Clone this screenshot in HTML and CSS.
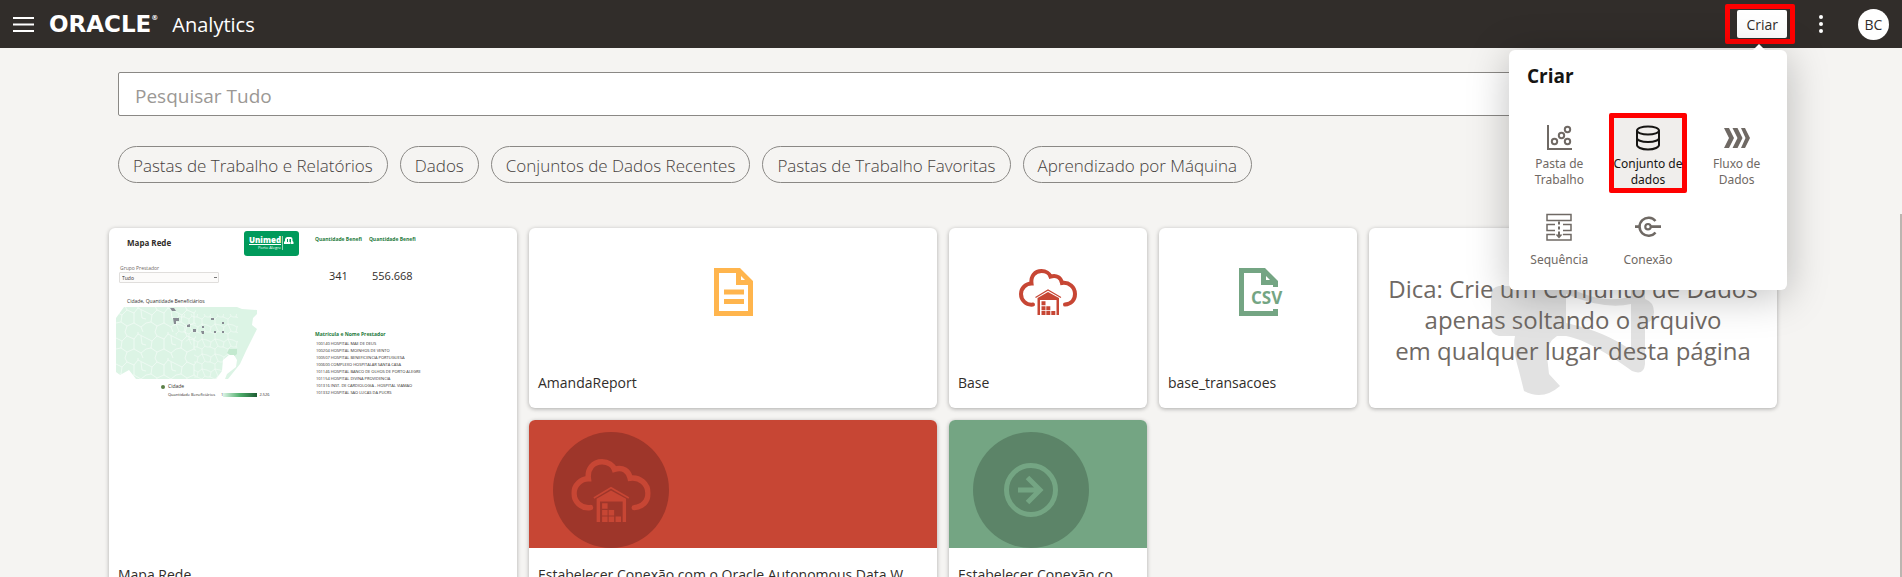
FILE: index.html
```html
<!DOCTYPE html>
<html lang="pt-BR">
<head>
<meta charset="utf-8">
<title>Oracle Analytics</title>
<link rel="stylesheet" href="styles.css">
</head>
<body>
<svg class="defs" aria-hidden="true">
  <symbol id="cloud-house" viewBox="0 0 58 46">
    <path d="M14 35.500C7 36.500 2 31 2 25C2 19 7 14.500 12.500 14.500C11.500 7 16 2 22.500 2C27 2 30.500 4.500 31.500 7.500C38 5.500 42 9 43 14C50 13 56 18 56 25C56 31 52 35 46 35.500" fill="none" stroke="currentColor" stroke-width="4" stroke-linecap="round"/>
    <path d="M16.500 28.500L29 21L42 28.500" fill="none" stroke="currentColor" stroke-width="1.200"/>
    <path fill="currentColor" d="M18.500 46V29L29 23L40 29V46H37.500V31H21V46Z"/>
    <path fill="currentColor" d="M22.500 32.300h4v4h-4zM22.500 37.200h4v4h-4zM22.500 42h4v4h-4zM27.300 37.200h4v4h-4zM27.300 42h4v4h-4zM32.300 42h4v4h-4z"/>
  </symbol>
</svg>
<header class="topbar">
  <button class="icon-button menu-button" aria-label="Menu">
    <svg width="22" height="16" viewBox="0 0 22 16"><path d="M0 2h21M0 8.500h21M0 15h21" stroke="#fff" stroke-width="2"/></svg>
  </button>
  <span class="brand">ORACLE<sup class="brand-mark">®</sup></span>
  <span class="product">Analytics</span>
  <div class="actions">
    <div class="create">
      <div class="create-frame"><button class="create-button" aria-expanded="true">Criar</button></div>
      <section class="popup" aria-label="Criar">
        <h2 class="popup-title">Criar</h2>
        <div class="popup-grid">
          <button class="tile">
            <svg width="26" height="26" viewBox="0 0 26 26" fill="none" stroke="currentColor" stroke-width="2"><path d="M2 0v24H26"/><circle cx="8.500" cy="16.500" r="2.700"/><circle cx="15.500" cy="10.500" r="2.700"/><circle cx="21.500" cy="4.500" r="2.700"/><circle cx="21.500" cy="16.500" r="2.700"/></svg>
            <span class="tile-label">Pasta de<br>Trabalho</span>
          </button>
          <button class="tile tile-selected">
            <svg width="26" height="26" viewBox="0 0 26 26" fill="none" stroke="currentColor" stroke-width="2"><ellipse cx="13" cy="5.500" rx="11" ry="4"/><path d="M2 5.500V20C2 22 6 24.500 13 24.500S24 22 24 20V5.500M2 13C2 15 6 17 13 17S24 15 24 13"/></svg>
            <span class="tile-label">Conjunto de<br>dados</span>
          </button>
          <button class="tile">
            <svg width="26" height="26" viewBox="0 0 26 26" fill="currentColor"><path d="M0 3H5L10 13L5 23H0L5 13ZM8.500 3H13.500L18.500 13L13.500 23H8.500L13.500 13ZM17 3H21L26 13L21 23H17L21.500 13Z"/></svg>
            <span class="tile-label">Fluxo de<br>Dados</span>
          </button>
          <button class="tile">
            <svg width="26" height="28" viewBox="0 0 26 28" fill="none" stroke="currentColor" stroke-width="1.500"><path d="M1 1.500H25V7.500H1ZM9 11.500H1V17.500H9M17 11.500H25V17.500H17M9 21.500H1V27H25V21.500H17"/><path d="M13 8.500v3M13 13.500v3M13 18.500v5" stroke-width="2"/><path d="M9.500 21.500h7L13 25.500Z" fill="currentColor" stroke="none"/></svg>
            <span class="tile-label">Sequência</span>
          </button>
          <button class="tile">
            <svg width="26" height="28" viewBox="0 0 26 28" fill="none" stroke="currentColor"><path d="M20.500 8A9 9 0 1 0 20.500 19.500" stroke-width="2.500"/><circle cx="13" cy="13.700" r="2.700" stroke-width="2.200"/><path d="M0 13.700h5M16 13.700h10" stroke-width="2.800"/></svg>
            <span class="tile-label">Conexão</span>
          </button>
        </div>
      </section>
    </div>
    <button class="icon-button more-button" aria-label="Mais opções">
      <svg width="6" height="18" viewBox="0 0 6 18" fill="#fff"><circle cx="3" cy="2" r="2"/><circle cx="3" cy="9" r="2"/><circle cx="3" cy="16" r="2"/></svg>
    </button>
    <button class="avatar">BC</button>
  </div>
</header>
<main class="home">
  <div class="search-area">
    <input class="search" type="search" placeholder="Pesquisar Tudo" aria-label="Pesquisar Tudo">
    <nav class="chips">
      <button class="chip">Pastas de Trabalho e Relatórios</button>
      <button class="chip">Dados</button>
      <button class="chip">Conjuntos de Dados Recentes</button>
      <button class="chip">Pastas de Trabalho Favoritas</button>
      <button class="chip">Aprendizado por Máquina</button>
    </nav>
  </div>
  <div class="cards">
    <article class="card card-large">
      <div class="preview">
        <div class="preview-left">
          <div class="preview-head">
            <h4 class="preview-title">Mapa Rede</h4>
            <div class="unimed">
              <div class="unimed-text"><b>Unimed</b><span>Porto Alegre</span></div>
              <svg width="12" height="14" viewBox="0 0 12 14"><path d="M.5 0V14" stroke="#fff" stroke-width=".6"/><path d="M2 8V6L3 5V3Q3.500 1 5.500 1H8.500Q10.500 1 10.500 3V5L11.500 6V8H9V3H7.500V6H8.500V8H5V6H6V3H5V8Z" fill="#fff"/></svg>
            </div>
          </div>
          <label class="preview-label" for="grupo">Grupo Prestador</label>
          <select class="preview-select" id="grupo"><option>Tudo</option></select>
          <h5 class="preview-caption">Cidade, Quantidade Beneficiários</h5>
          <svg class="map" width="142" height="74" viewBox="0 0 142 74" aria-hidden="true">
            <defs>
              <clipPath id="land"><path d="M0 12L8 1H121L126 3L141 4V8L137 12L136 19L141 23L130 45L124 58L112 73H109L111 68L120 61L121 54L118 49H113L107 54L106 65L100 73H20L13 64L4 69L0 66Z"/></clipPath>
              <pattern id="cells" width="30" height="26" patternUnits="userSpaceOnUse"><path d="M0 6L6 9L11 4L18 7L22 2L30 6M6 9L5 16L11 20L18 17L18 7M18 17L25 21L30 17M11 20L9 26M25 21L27 26M22 2V0M11 4L9 0M5 16L0 17M25 4L26 12L30 13" fill="none" stroke="#fff" stroke-width=".5"/></pattern>
              <pattern id="cells-small" width="13" height="15" patternUnits="userSpaceOnUse"><path d="M0 4L4 6L8 3L13 4M4 6L3 11L8 13L11 10L8 3M11 10L13 11M0 11H3M8 13V15M8 3V0" fill="none" stroke="#fff" stroke-width=".4"/></pattern>
            </defs>
            <g clip-path="url(#land)">
              <rect width="142" height="74" fill="#dcf4e5"/>
              <rect width="80" height="74" fill="url(#cells)"/>
              <path d="M55 8H122V40L105 74H78V40L60 30Z" fill="url(#cells-small)"/>
              <path d="M113 43H121V48L117 51L111 47Z" fill="#c3e9cf"/>
            </g>
            <path fill="#888b93" d="M54 2h4l2 3h-4zM57 12h6v3h-3v3h-2zM71 19l3-1v3h-3zM77 23h3v3h-3zM86 20h2v2h-2zM85 25h3v3h-2zM95 12h3v2h-3zM106 16h2v2h-2zM98 25h2v2h-2zM106 25h2v2h-2z"/>
          </svg>
          <div class="legend"><i class="dot"></i>Cidade</div>
          <div class="legend legend-scale">Quantidade Beneficiários<span class="scale-from">1</span><i class="scale"></i>2.526</div>
        </div>
        <div class="preview-right">
          <div class="kpis">
            <div class="kpi"><h5>Quantidade Benefi</h5><b>341</b></div>
            <div class="kpi"><h5>Quantidade Benefi</h5><b>556.668</b></div>
          </div>
          <h5 class="list-title">Matrícula e Nome Prestador</h5>
          <ul class="list">
            <li>100140 HOSPITAL MAE DE DEUS</li>
            <li>100204 HOSPITAL MOINHOS DE VENTO</li>
            <li>100507 HOSPITAL BENEFICENCIA PORTUGUESA</li>
            <li>100600 COMPLEXO HOSPITALAR SANTA CASA</li>
            <li>101146 HOSPITAL BANCO DE OLHOS DE PORTO ALEGRE</li>
            <li>101154 HOSPITAL DIVINA PROVIDENCIA</li>
            <li>101316 INST. DE CARDIOLOGIA - HOSPITAL VIAMAO</li>
            <li>101332 HOSPITAL SAO LUCAS DA PUCRS</li>
          </ul>
        </div>
      </div>
      <h3 class="card-title">Mapa Rede</h3>
    </article>
    <article class="card card-wide">
      <div class="card-art">
        <svg width="39" height="48" viewBox="0 0 39 48" fill="#ffb54d"><path fill-rule="evenodd" d="M0 0H26L39 13V48H0ZM5 5V43H34V17H22V5ZM27 8V12H31Z"/><path d="M10 21.500H30V26.500H10ZM10 31H30V36H10Z"/></svg>
      </div>
      <h3 class="card-title">AmandaReport</h3>
    </article>
    <article class="card">
      <div class="card-art red"><svg width="58" height="46"><use href="#cloud-house"/></svg></div>
      <h3 class="card-title">Base</h3>
    </article>
    <article class="card">
      <div class="card-art">
        <svg class="csv" width="39" height="48" viewBox="0 0 39 48" fill="#74a583"><path fill-rule="evenodd" d="M0 0H26L39 13V19H34V17H22V5H5V43H34V41H39V48H0ZM27 8V12H31Z"/><text class="csv-text" x="12" y="36">CSV</text></svg>
      </div>
      <h3 class="card-title">base_transacoes</h3>
    </article>
    <article class="card card-wide tip">
      <svg class="tip-art" width="164" height="112" viewBox="122 57 164 112" aria-hidden="true"><path fill="#e2e2e2" d="M130 58H197Q235 78 262 68V60H276V71Q285 74 285 84Q285 93 276 96V136Q275 148 263 143C240 126 215 111 197 108H188Q178 114 178 128L180 146L191 158Q174 173 155 163L150 143Q143 120 146 108H130Q122 106 122 100V66Q123 59 130 58ZM197 66V95Q235 103 262 122V76Q235 82 197 66Z" fill-rule="evenodd"/></svg>
      <p class="tip-text">Dica: Crie um Conjunto de Dados<br>apenas soltando o arquivo<br>em qualquer lugar desta página</p>
    </article>
    <article class="card card-wide">
      <div class="banner banner-red"><div class="disc"><svg width="80" height="63" viewBox="0 0 58 46"><use href="#cloud-house"/></svg></div></div>
      <h3 class="card-title">Estabelecer Conexão com o Oracle Autonomous Data W</h3>
    </article>
    <article class="card">
      <div class="banner banner-green"><div class="disc"><svg width="54" height="54" viewBox="0 0 54 54" fill="none" stroke="currentColor" stroke-width="5"><circle cx="27" cy="27" r="24.500"/><path d="M14 27H37M23.500 14.500L36 27L23.500 39.500"/></svg></div></div>
      <h3 class="card-title">Estabelecer Conexão co</h3>
    </article>
  </div>
  <div class="scroll-thumb"></div>
</main>
</body>
</html>
```

FILE: styles.css
```css
* { box-sizing: border-box; }

body {
  margin: 0;
  height: 100vh;
  display: flex;
  flex-direction: column;
  overflow: hidden;
  background: #f5f4f2;
  color: #312d2a;
  font-family: "Open Sans", "Noto Sans", sans-serif;
}

h2, h3, h4, h5, p, ul { margin: 0; padding: 0; }
button { margin: 0; font-family: inherit; cursor: pointer; }
svg { display: block; flex: none; }
.defs { position: absolute; width: 0; height: 0; }

/* Top bar */
.topbar {
  flex: none;
  display: flex;
  align-items: center;
  height: 48px;
  padding: 0 13px;
  background: #312d2a;
  color: #fff;
}
.icon-button { border: 0; padding: 0; background: none; }
.brand {
  display: flex;
  align-items: flex-start;
  margin-left: 14px;
  font: bold 23px/28px "DejaVu Sans", sans-serif;
}
.brand-mark { font-size: 7px; line-height: 16px; }
.product { margin-left: 14px; padding-top: 1px; font-size: 20px; line-height: 28px; }
.actions { margin-left: auto; display: flex; align-items: center; }
.create { position: relative; }
.create-frame {
  display: flex;
  padding: 1px 3px 1px 7px;
  border: 5px solid #f00;
  border-radius: 2px;
}
.create-button {
  height: 28px;
  padding: 0 9px;
  border: 0;
  border-radius: 2px;
  background: #fff;
  color: #312d2a;
  font-size: 14px;
}
.more-button { margin-left: 23px; }
.avatar {
  width: 31px;
  height: 31px;
  margin-left: 34px;
  padding: 0;
  border: 0;
  border-radius: 50%;
  background: #fff;
  color: #312d2a;
  font-size: 14px;
}

/* Create popup */
.popup {
  position: absolute;
  z-index: 5;
  top: 46px;
  right: 8px;
  width: 278px;
  padding: 14px 6px 9px;
  border-radius: 6px;
  background: #fff;
  box-shadow: 0 6px 40px rgba(0, 0, 0, .25);
  color: #161513;
}
.popup::before {
  content: "";
  position: absolute;
  top: -6px;
  right: 21px;
  border: 7px solid transparent;
  border-top: 0;
  border-bottom-color: #fff;
}
.popup-title { padding-left: 12px; font-size: 19px; line-height: 24px; }
.popup-grid {
  display: grid;
  grid-template-columns: repeat(3, 1fr);
  justify-items: center;
  gap: 8px 0;
  padding-top: 25px;
}
.tile {
  display: flex;
  flex-direction: column;
  align-items: center;
  justify-content: space-between;
  width: 78px;
  height: 80px;
  padding: 7px 0 0;
  border: 5px solid transparent;
  border-radius: 2px;
  background: none;
  color: #6f6964;
  font-family: "Noto Sans", sans-serif;
  font-size: 12px;
  line-height: 16px;
}
.tile-label {
  display: flex;
  align-items: center;
  height: 32px;
  white-space: nowrap;
}
.tile-label { display: grid; align-content: center; }
.tile-selected {
  background: #f0eeec;
  border-color: #f00;
  color: #161513;
}

/* Search */
.home {
  position: relative;
  flex: 1;
  min-height: 0;
  padding: 24px 125px 0 109px;
}
.search-area { padding: 0 9px; }
.search {
  display: block;
  width: 100%;
  height: 44px;
  padding: 4px 16px 0;
  border: 1px solid #8a8885;
  border-radius: 2px;
  background: #fff;
  font-family: inherit;
  font-size: 19px;
}
.search::placeholder { color: #9b9895; }
.chips { display: flex; gap: 12px; padding-top: 30px; }
.chip {
  height: 37px;
  padding: 2px 14px 0;
  border: 1px solid #8a8885;
  border-radius: 19px;
  background: none;
  color: #46413d;
  font-size: 17px;
  font-weight: 300;
  white-space: nowrap;
}

/* Cards */
.cards {
  display: grid;
  grid-template-columns: repeat(8, minmax(0, 1fr));
  grid-auto-rows: 180px;
  gap: 12px;
  padding-top: 45px;
}
.card {
  position: relative;
  display: flex;
  flex-direction: column;
  overflow: hidden;
  border-radius: 6px;
  background: #fff;
  box-shadow: 0 1px 4px rgba(0, 0, 0, .3);
}
.card-wide { grid-column: span 2; }
.card-large { grid-column: span 2; grid-row: span 2; }
.card-art {
  flex: 1;
  display: flex;
  justify-content: center;
  align-items: center;
}
.red { color: #c74634; }
.card-title {
  flex: none;
  height: 52px;
  padding: 17px 9px 0;
  font-size: 14px;
  font-weight: 400;
  line-height: 20px;
  white-space: nowrap;
}
.csv { overflow: visible; }
.csv-text { font-size: 17px; font-weight: 700; }
.banner { flex: 1; padding: 12px 24px 0; }
.banner-red { background: #c74634; color: #c74634; }
.banner-green { background: #74a583; color: #74a583; }
.disc {
  display: flex;
  justify-content: center;
  align-items: center;
  width: 116px;
  height: 116px;
  border-radius: 50%;
  background: #9e362a;
}
.banner-green .disc { background: #5c8468; }

.tip { justify-content: center; }
.tip-art { position: absolute; top: 57px; left: 122px; }
.tip-text {
  position: relative;
  padding-top: 3px;
  color: #6f6964;
  font-size: 24px;
  line-height: 31px;
  text-align: center;
}

.scroll-thumb {
  position: absolute;
  top: 166px;
  right: 0;
  bottom: 0;
  width: 2px;
  background: #bbb5b0;
}

/* Report preview */
.preview { flex: 1; display: flex; padding: 3px 7px 0; font-size: 5px; line-height: 7px; }
.preview-left { width: 183px; }
.preview-head { display: flex; justify-content: space-between; padding-left: 11px; }
.preview-title { padding-top: 6px; font-size: 8px; line-height: 12px; }
.unimed {
  display: flex;
  justify-content: center;
  gap: 1px;
  width: 55px;
  height: 25px;
  padding-top: 5px;
  border-radius: 3px;
  background: #009a5b;
  color: #fff;
}
.unimed-text { text-align: right; }
.unimed-text b { display: block; border-bottom: 1px solid #fff; font-size: 8px; font-weight: 800; line-height: 8px; }
.unimed-text span { font-size: 4px; line-height: 5px; display: block; }
.preview-label { display: block; padding: 9px 0 0 4px; color: #6f6964; }
.preview-select {
  display: block;
  width: 100px;
  height: 11px;
  margin: 0 0 0 3px;
  padding: 0 2px;
  border: 1px solid #e0dedc;
  border-radius: 1px;
  appearance: none;
  background: linear-gradient(#777, #777) 94px 4px / 3px 1px no-repeat #fcfbfa;
  color: #312d2a;
  font: 5px "Open Sans", sans-serif;
}
.preview-caption { padding: 14px 0 0 11px; font-size: 5px; font-weight: 400; line-height: 8px; }
.map { margin-top: 1px; }
.legend { display: flex; align-items: center; padding: 3px 0 0 45px; font-size: 5px; line-height: 7px; }
.legend-scale { padding: 1px 0 0 52px; font-size: 4px; }
.dot { width: 4px; height: 4px; margin-right: 3px; border-radius: 50%; background: #5b7f46; }
.scale-from { margin-left: 6px; }
.scale { width: 34px; height: 4px; margin-right: 2px; background: linear-gradient(90deg, #dcf4e5, #4fae6c, #1d5c33); }
.preview-right { padding-left: 16px; }
.kpis { display: flex; gap: 7px; padding-top: 4px; }
.kpi { text-align: center; }
.kpi h5, .list-title { color: #1d7a3c; font-size: 5px; line-height: 8px; }
.kpi b { display: block; padding-top: 25px; font-size: 11px; font-weight: 400; line-height: 16px; }
.list-title { padding-top: 46px; }
.list { padding: 2px 0 0 1px; list-style: none; font-size: 4px; line-height: 7px; color: #312d2a; }
```
